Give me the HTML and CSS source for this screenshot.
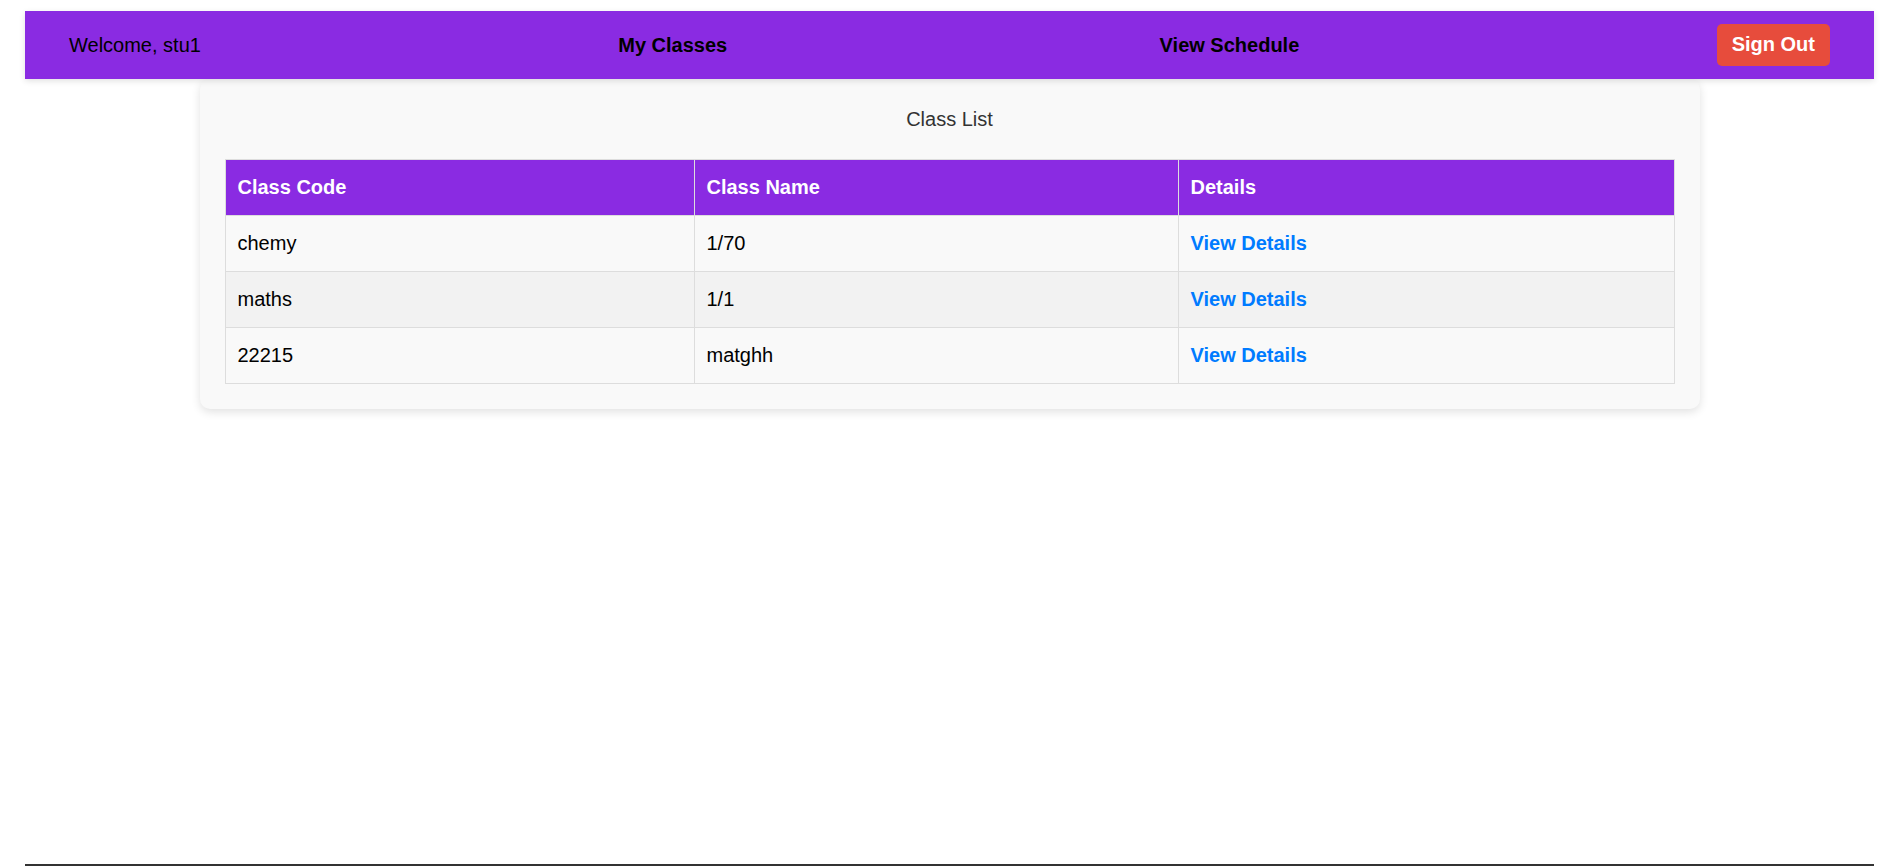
FILE: index.html
```html
<!DOCTYPE html>
<html lang="en">
<head>
<meta charset="utf-8">
<title>My Classes</title>
<link rel="stylesheet" href="styles.css">
</head>
<body>
<div class="page">
  <nav class="navbar">
    <span class="welcome">Welcome, stu1</span>
    <a class="nav-link" href="#">My Classes</a>
    <a class="nav-link nav-link-schedule" href="#">View Schedule</a>
    <button class="signout">Sign Out</button>
  </nav>
  <main class="card">
    <p class="card-title">Class List</p>
    <table class="class-table">
      <colgroup>
        <col class="col-code">
        <col class="col-name">
        <col class="col-details">
      </colgroup>
      <thead>
        <tr><th>Class Code</th><th>Class Name</th><th>Details</th></tr>
      </thead>
      <tbody>
        <tr><td>chemy</td><td>1/70</td><td><a class="details-link" href="#">View Details</a></td></tr>
        <tr><td>maths</td><td>1/1</td><td><a class="details-link" href="#">View Details</a></td></tr>
        <tr><td>22215</td><td>matghh</td><td><a class="details-link" href="#">View Details</a></td></tr>
      </tbody>
    </table>
  </main>
  <footer class="footer"></footer>
</div>
</body>
</html>
```
FILE: styles.css
```css
* { box-sizing: border-box; }

html, body {
  margin: 0;
  padding: 0;
  background: #ffffff;
  font-family: "Liberation Sans", Arial, sans-serif;
  font-size: 20px;
  color: #000;
}

.page {
  min-height: 100vh;
  padding: 11px 23px 0 25px;
  display: flex;
  flex-direction: column;
}

.navbar {
  height: 68px;
  background: #8a2be2;
  display: flex;
  align-items: center;
  justify-content: space-between;
  padding: 0 44px;
  box-shadow: 0 2px 6px rgba(0, 0, 0, 0.12);
  position: relative;
  z-index: 1;
}

.welcome {
  color: #000;
  font-size: 20px;
  line-height: 23px;
}

.nav-link {
  color: #000;
  font-weight: bold;
  text-decoration: none;
  font-size: 20px;
  line-height: 23px;
}

.nav-link-schedule {
  margin-left: 15px;
}

.signout {
  background: #e74c3c;
  color: #fff;
  border: none;
  border-radius: 5px;
  font-family: "Liberation Sans", Arial, sans-serif;
  font-weight: bold;
  font-size: 20px;
  line-height: 23px;
  padding: 9px 15px 10px;
  height: 42px;
}

.card {
  width: 1500px;
  margin: 0 auto;
  background: #f9f9f9;
  border-radius: 10px;
  padding: 25px;
  box-shadow: 0 3px 10px rgba(0, 0, 0, 0.12);
}

.card-title {
  margin: 4px 0 28px;
  text-align: center;
  color: #333;
  font-size: 20px;
  line-height: 23px;
}

.class-table {
  width: 100%;
  border-collapse: collapse;
  table-layout: fixed;
}

.col-code { width: 469px; }
.col-name { width: 484px; }

.class-table th,
.class-table td {
  border: 1px solid #ddd;
  padding: 16px 12px;
  text-align: left;
  font-size: 20px;
  line-height: 23px;
}

.class-table th {
  background: #8a2be2;
  color: #fff;
  font-weight: bold;
}

.class-table tbody tr:nth-child(even) td {
  background: #f2f2f2;
}

.details-link {
  color: #007bff;
  font-weight: bold;
  text-decoration: none;
}

.footer {
  margin-top: auto;
  border-top: 2px solid #333;
}
```
